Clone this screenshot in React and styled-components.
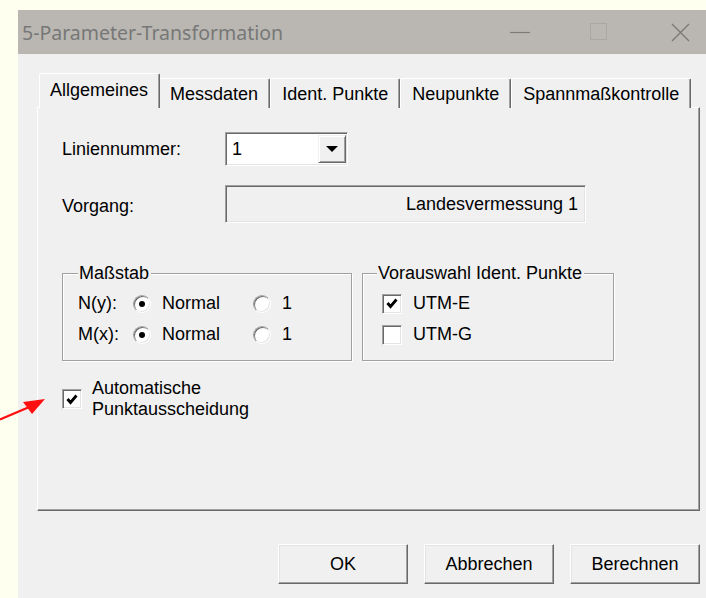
import React from 'react';
import styled, { createGlobalStyle } from 'styled-components';

const Global = createGlobalStyle`
  html, body { margin: 0; padding: 0; }
  body { background: #fffff0; width: 706px; height: 598px; overflow: hidden; }
  #root { width: 706px; height: 598px; }
`;

const Page = styled.div`
  position: relative;
  width: 706px;
  height: 598px;
  box-sizing: border-box;
  padding: 10px 0 0 18px;
  background: #fffff0;
  overflow: hidden;
`;

const Dialog = styled.div`
  width: 688px;
  height: 588px;
  display: flex;
  flex-direction: column;
  background: #f0f0f0;
  font-family: "Liberation Sans", Arial, sans-serif;
  font-size: 18px;
  color: #000;
`;

const TitleBar = styled.div`
  flex: none;
  height: 44px;
  background: #bab7b2;
  display: flex;
  align-items: center;
`;

const Title = styled.div`
  flex: 1;
  padding-left: 4px;
  font-family: "Noto Sans", "Open Sans", sans-serif;
  font-size: 19.5px;
  color: #777;
  white-space: nowrap;
`;

const CaptionIcon = styled.svg`
  flex: none;
  display: block;
  margin-right: ${p => p.$gap}px;
`;

const Body = styled.div`
  flex: 1;
  display: flex;
  flex-direction: column;
  padding: 19px 6px 0 19px;
`;

const TabStrip = styled.div`
  position: relative;
  z-index: 1;
  display: flex;
  align-items: flex-end;
  height: 35px;
  margin-bottom: -1px;
  padding-left: 4px;
`;

const Tab = styled.div`
  box-sizing: border-box;
  height: ${p => (p.$active ? 35 : 30)}px;
  margin: 0 ${p => (p.$active ? -2 : 0)}px;
  padding: ${p => (p.$active ? '0 11px 2px 10px' : '1px 11px 0 11px')};
  display: flex;
  align-items: center;
  background: #f0f0f0;
  border-top: 1px solid #fff;
  border-left: 1px solid #fff;
  border-right: 1px solid #696969;
  border-radius: 2px 2px 0 0;
  box-shadow: inset -1px 0 0 #a0a0a0;
  white-space: nowrap;
  position: relative;
  z-index: ${p => (p.$active ? 2 : 1)};
`;

const Panel = styled.div`
  flex: none;
  box-sizing: border-box;
  height: 404px;
  padding: 24px 0 0 24px;
  display: flex;
  flex-direction: column;
  border-top: 1px solid #fff;
  border-left: 1px solid #fff;
  border-right: 1px solid #696969;
  border-bottom: 1px solid #696969;
  box-shadow: inset -1px -1px 0 #a0a0a0;
`;

const FieldRow = styled.div`
  display: grid;
  grid-template-columns: 163px auto;
  align-items: center;
  margin-top: ${p => p.$top || 0}px;
`;

const FieldLabel = styled.div`
  padding-top: ${p => p.$shift || 0}px;
`;

const Sunken = styled.div`
  box-sizing: border-box;
  width: ${p => p.$w}px;
  height: ${p => p.$h}px;
  display: flex;
  align-items: center;
  border: 1px solid;
  border-color: #a0a0a0 #fff #fff #a0a0a0;
  box-shadow: inset 1px 1px 0 #696969, inset -1px -1px 0 #e3e3e3;
  background: ${p => (p.$readonly ? '#f0f0f0' : '#fff')};
`;

const ComboText = styled.div`
  flex: 1;
  padding-left: 6px;
`;

const ReadonlyText = styled.div`
  flex: 1;
  text-align: right;
  padding-right: 7px;
`;

const DropButton = styled.div`
  box-sizing: border-box;
  flex: none;
  width: 28px;
  height: 28px;
  margin-right: 1px;
  display: flex;
  align-items: center;
  justify-content: center;
  background: #f0f0f0;
  border: 1px solid;
  border-color: #f0f0f0 #696969 #696969 #f0f0f0;
  box-shadow: inset 1px 1px 0 #fff, inset -1px -1px 0 #a0a0a0;
`;

const Groups = styled.div`
  display: flex;
  gap: 10px;
  margin-top: 50px;
`;

const GroupBox = styled.div`
  box-sizing: border-box;
  width: ${p => p.$w}px;
  padding: 0 0 10px ${p => p.$pad}px;
  border: 1px solid #a0a0a0;
  box-shadow: inset 1px 1px 0 #fff, 1px 1px 0 #fff;
`;

const GroupTitle = styled.div`
  width: fit-content;
  margin: -11px 0 0 ${p => p.$indent}px;
  padding: 0 2px 0 1px;
  line-height: 20px;
  background: #f0f0f0;
`;

const OptionRow = styled.div`
  display: flex;
  align-items: center;
  height: 31px;
  margin-top: ${p => p.$top || 0}px;
`;

const Cell = styled.div`
  flex: none;
  width: ${p => (p.$w ? `${p.$w}px` : 'auto')};
  margin-left: ${p => p.$gap || 0}px;
`;

const RadioCircle = styled.span`
  flex: none;
  box-sizing: border-box;
  width: 18px;
  height: 18px;
  border-radius: 50%;
  display: flex;
  align-items: center;
  justify-content: center;
  border: 1px solid;
  border-color: #a0a0a0 #fff #fff #a0a0a0;
  box-shadow: inset 1px 1px 0 #696969, inset -1px -1px 0 #e3e3e3;
  background: #fff;
`;

const RadioDot = styled.span`
  width: 6px;
  height: 6px;
  border-radius: 50%;
  background: #000;
`;

const CheckBox = styled.span`
  flex: none;
  box-sizing: border-box;
  width: 20px;
  height: 20px;
  display: flex;
  align-items: center;
  justify-content: center;
  border: 1px solid;
  border-color: #a0a0a0 #fff #fff #a0a0a0;
  box-shadow: inset 1px 1px 0 #696969, inset -1px -1px 0 #e3e3e3;
  background: #fff;
`;

const CheckRow = styled.div`
  display: flex;
  align-items: center;
  gap: 10px;
  margin-top: 17px;
`;

const CheckText = styled.div`
  line-height: 21px;
`;

const ButtonRow = styled.div`
  display: flex;
  justify-content: flex-end;
  gap: 16px;
  margin-top: 33px;
`;

const Button = styled.div`
  box-sizing: border-box;
  width: 130px;
  height: 40px;
  display: flex;
  align-items: center;
  justify-content: center;
  background: #f0f0f0;
  border: 1px solid;
  border-color: #fff #696969 #696969 #fff;
  box-shadow: inset -1px -1px 0 #a0a0a0, inset 1px 1px 0 #e3e3e3;
`;

const Annotation = styled.svg`
  position: absolute;
  left: 0;
  top: 390px;
`;

const Radio = ({ checked }) => (
  <RadioCircle>{checked && <RadioDot />}</RadioCircle>
);

const Check = ({ checked }) => (
  <CheckBox>
    {checked && (
      <svg width="12" height="11" viewBox="0 0 12 11">
        <polyline points="1.5,5 4.5,8.5 10.5,1.5" fill="none" stroke="#000" strokeWidth="2.8" />
      </svg>
    )}
  </CheckBox>
);

const tabs = ['Allgemeines', 'Messdaten', 'Ident. Punkte', 'Neupunkte', 'Spannmaßkontrolle'];

export default function App() {
  return (
    <>
      <Global />
      <Page>
        <Dialog>
          <TitleBar>
            <Title>5-Parameter-Transformation</Title>
            <CaptionIcon width="20" height="20" $gap={60} viewBox="0 0 20 20">
              <line x1="0" y1="10.5" x2="20" y2="10.5" stroke="#7d7b78" strokeWidth="1.2" />
            </CaptionIcon>
            <CaptionIcon width="18" height="18" $gap={63} viewBox="0 0 18 18">
              <rect x="0.5" y="0.5" width="16" height="16" fill="none" stroke="#aaa7a2" strokeWidth="1" />
            </CaptionIcon>
            <CaptionIcon width="19" height="19" $gap={16} viewBox="0 0 19 19">
              <path d="M1 1 L18 18 M18 1 L1 18" stroke="#7a7875" strokeWidth="1.3" />
            </CaptionIcon>
          </TitleBar>
          <Body>
            <TabStrip>
              {tabs.map((t, i) => (
                <Tab key={t} $active={i === 0}>{t}</Tab>
              ))}
            </TabStrip>
            <Panel>
              <FieldRow>
                <FieldLabel>Liniennummer:</FieldLabel>
                <Sunken $w={123} $h={34}>
                  <ComboText>1</ComboText>
                  <DropButton>
                    <svg width="12" height="6" viewBox="0 0 12 6">
                      <polygon points="0,0 12,0 6,6" fill="#000" />
                    </svg>
                  </DropButton>
                </Sunken>
              </FieldRow>
              <FieldRow $top={19}>
                <FieldLabel $shift={5}>Vorgang:</FieldLabel>
                <Sunken $w={361} $h={38} $readonly>
                  <ReadonlyText>Landesvermessung 1</ReadonlyText>
                </Sunken>
              </FieldRow>
              <Groups>
                <GroupBox $w={290} $pad={15}>
                  <GroupTitle $indent={0}>Maßstab</GroupTitle>
                  <OptionRow $top={5}>
                    <Cell $w={55}>N(y):</Cell>
                    <Radio checked />
                    <Cell $w={91} $gap={11}>Normal</Cell>
                    <Radio />
                    <Cell $gap={11}>1</Cell>
                  </OptionRow>
                  <OptionRow>
                    <Cell $w={55}>M(x):</Cell>
                    <Radio checked />
                    <Cell $w={91} $gap={11}>Normal</Cell>
                    <Radio />
                    <Cell $gap={11}>1</Cell>
                  </OptionRow>
                </GroupBox>
                <GroupBox $w={252} $pad={19}>
                  <GroupTitle $indent={-5}>Vorauswahl Ident. Punkte</GroupTitle>
                  <OptionRow $top={5}>
                    <Check checked />
                    <Cell $gap={11}>UTM-E</Cell>
                  </OptionRow>
                  <OptionRow>
                    <Check />
                    <Cell $gap={11}>UTM-G</Cell>
                  </OptionRow>
                </GroupBox>
              </Groups>
              <CheckRow>
                <Check checked />
                <CheckText>
                  Automatische
                  <br />
                  Punktausscheidung
                </CheckText>
              </CheckRow>
            </Panel>
            <ButtonRow>
              <Button>OK</Button>
              <Button>Abbrechen</Button>
              <Button>Berechnen</Button>
            </ButtonRow>
          </Body>
        </Dialog>
        <Annotation width="50" height="35" viewBox="0 0 50 35">
          <line x1="0" y1="29.5" x2="34" y2="15" stroke="#ff1010" strokeWidth="2.2" />
          <polygon points="45,9 23,12 32,24" fill="#ff1010" />
        </Annotation>
      </Page>
    </>
  );
}
